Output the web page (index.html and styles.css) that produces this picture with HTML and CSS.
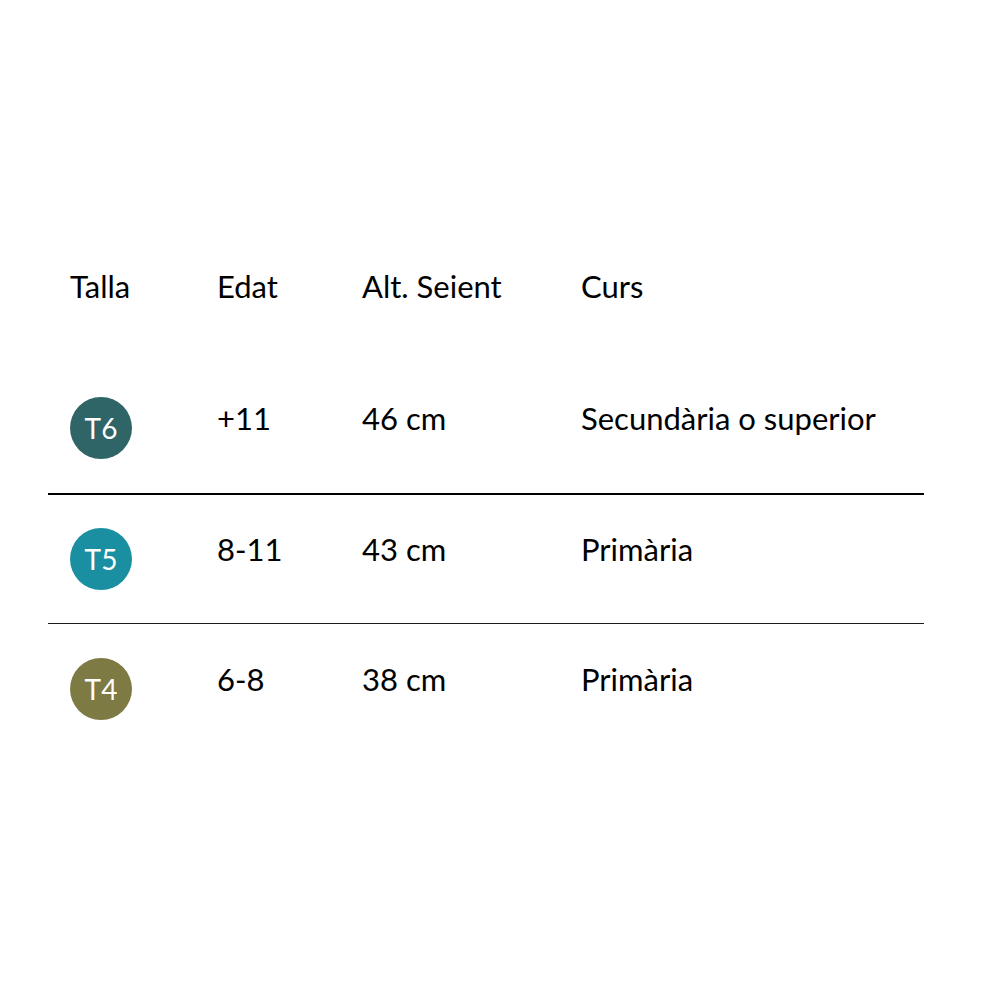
FILE: index.html
```html
<!DOCTYPE html>
<html lang="ca">
<head>
<meta charset="utf-8">
<link rel="stylesheet" href="styles.css">
</head>
<body>
<main class="page">
  <table class="sizes">
    <thead>
      <tr class="head-row">
        <th class="c1">Talla</th>
        <th class="c2">Edat</th>
        <th class="c3">Alt. Seient</th>
        <th class="c4">Curs</th>
      </tr>
    </thead>
    <tbody>
      <tr class="row row-first">
        <td><span class="badge t6">T6</span></td>
        <td>+11</td>
        <td>46 cm</td>
        <td>Secundària o superior</td>
      </tr>
      <tr class="row row-mid">
        <td><span class="badge t5">T5</span></td>
        <td>8-11</td>
        <td>43 cm</td>
        <td>Primària</td>
      </tr>
      <tr class="row">
        <td><span class="badge t4">T4</span></td>
        <td>6-8</td>
        <td>38 cm</td>
        <td>Primària</td>
      </tr>
    </tbody>
  </table>
</main>
</body>
</html>
```
FILE: styles.css
```css
html, body {
  margin: 0;
  padding: 0;
  background: #ffffff;
}
body {
  font-family: "Lato", "Noto Sans", sans-serif;
  color: #000000;
}
.page {
  padding: 262px 76px 0 48px;
}
.sizes {
  width: 876px;
  border-collapse: collapse;
  table-layout: fixed;
  font-size: 31px;
  line-height: 34px;
}
.c1 { width: 125px; }
.c2 { width: 123px; }
.c3 { width: 197px; }
.c4 { width: auto; }
th {
  font-weight: 400;
  text-align: left;
  padding: 7px 0 60px 22px;
}
td {
  vertical-align: top;
  text-align: left;
  padding: 34px 0 34px 22px;
}
.row td:not(:first-child) {
  padding-top: 38px;
}
.row-first td {
  border-bottom: 2px solid #000000;
}
.row-mid td {
  padding-top: 33px;
  padding-bottom: 33px;
  border-bottom: 1px solid #1a1a1a;
}
.row-mid td:not(:first-child) {
  padding-top: 37px;
}
.badge {
  display: flex;
  align-items: center;
  justify-content: center;
  width: 62px;
  height: 62px;
  border-radius: 50%;
  color: #ffffff;
  font-size: 28px;
  line-height: 1;
}
.t6 { background: #2f6566; }
.t5 { background: #1a8fa1; }
.t4 { background: #7d7b43; }
```
